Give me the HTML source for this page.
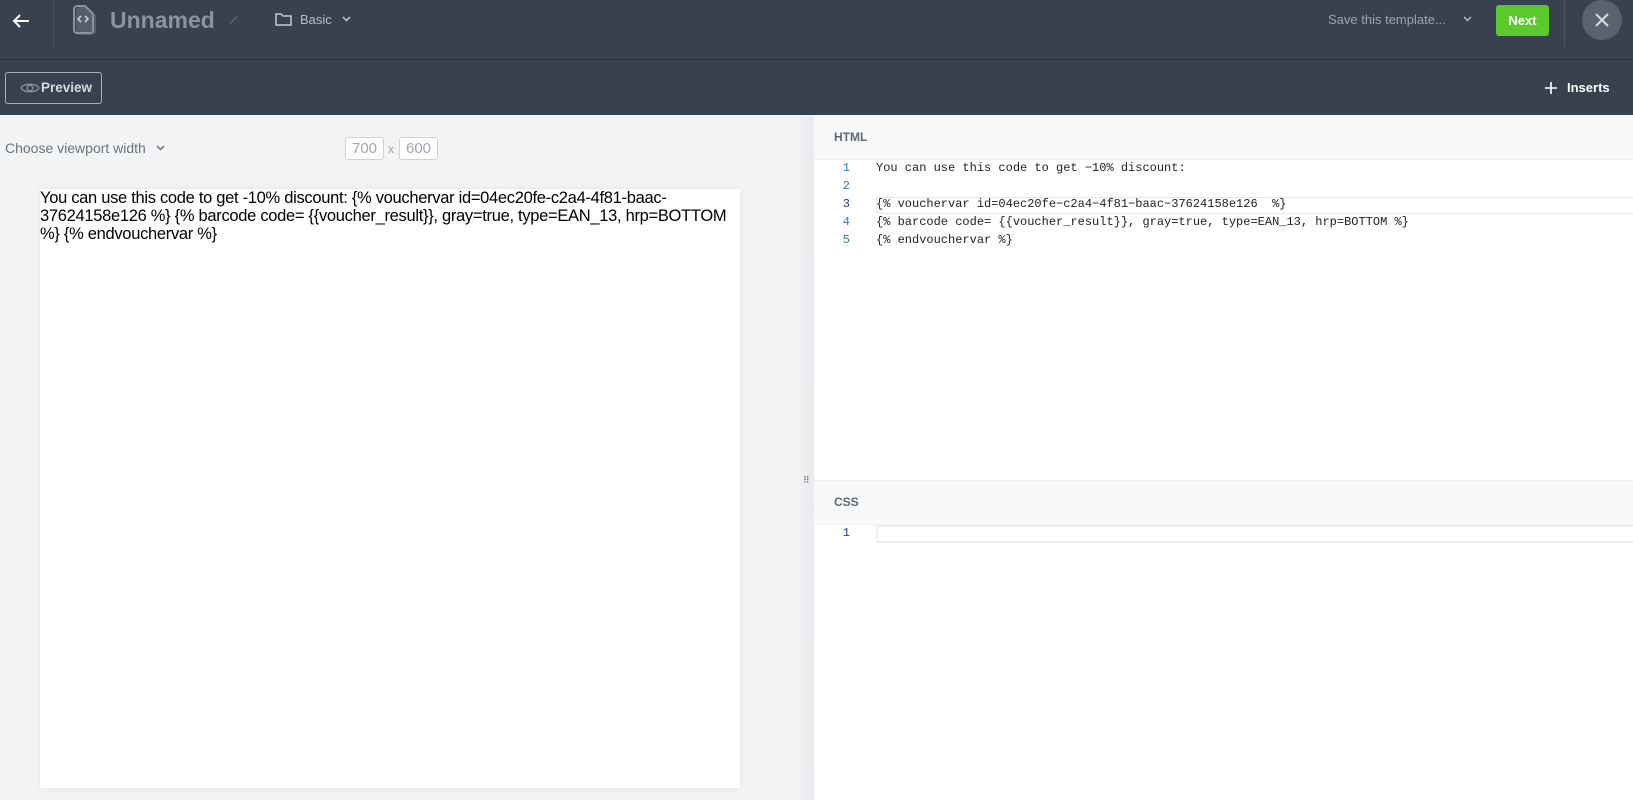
<!DOCTYPE html>
<html><head><meta charset="utf-8"><style>
*{margin:0;padding:0;box-sizing:border-box}
body{width:1633px;height:800px;overflow:hidden;font-family:"Liberation Sans",sans-serif;background:#f3f4f6;position:relative}
.hdr{position:absolute;left:0;top:0;width:1633px;height:60px;background:#38424e;border-bottom:1px solid #2c343e}
.tb{position:absolute;left:0;top:60px;width:1633px;height:55px;background:#38424e}
.a{position:absolute}
.ln{position:absolute;left:810px;width:40px;text-align:right;font:12px "Liberation Mono",monospace;color:#3b7ab0}
.cd{position:absolute;left:876px;font:12px "Liberation Mono",monospace;color:#222;white-space:pre}
</style></head><body>
<div class="hdr"></div>
<svg class="a" style="left:10px;top:10px" width="22" height="22" viewBox="0 0 22 22"><path d="M19 11H4M10 5l-6 6 6 6" stroke="#fff" stroke-width="2" fill="none"/></svg>
<div class="a" style="left:53px;top:0;width:1px;height:47px;background:#4d5662"></div>
<svg class="a" style="left:72px;top:5px" width="28" height="32" viewBox="0 0 28 32"><path d="M4 6a4 4 0 014-4h8l8 8v16a4 4 0 01-4 4H8a4 4 0 01-4-4z" fill="#555f6a"/><path d="M2 4a3 3 0 013-3h8l8 8v16a3 3 0 01-3 3H5a3 3 0 01-3-3z" fill="none" stroke="#8b939c" stroke-width="2"/><path d="M9 11l-3 3 3 3M13 11l3 3-3 3" stroke="#c5cad0" stroke-width="1.6" fill="none"/></svg>
<div class="a" style="left:110px;top:7px;font-size:23px;font-weight:bold;color:#8b939c">Unnamed</div>
<div class="a" style="left:233px;top:15px;width:1px;height:10px;background:#6b737c;transform:rotate(45deg)"></div>
<svg class="a" style="left:275px;top:12px" width="17" height="14" viewBox="0 0 17 14"><path d="M1 2h5l2 2h8v9H1z" fill="none" stroke="#c5cad0" stroke-width="1.5"/></svg>
<div class="a" style="left:300px;top:12px;font-size:13px;color:#b5bcc3">Basic</div>
<svg class="a" style="left:342px;top:16px" width="9" height="6"><path d="M1 1l3.5 3.5L8 1" stroke="#c5cad0" stroke-width="1.5" fill="none"/></svg>
<div class="a" style="left:1328px;top:12px;font-size:13px;color:#9ba3ab">Save this template...</div>
<svg class="a" style="left:1463px;top:16px" width="9" height="6"><path d="M1 1l3.5 3.5L8 1" stroke="#b5bcc3" stroke-width="1.5" fill="none"/></svg>
<div class="a" style="left:1496px;top:5px;width:53px;height:31px;background:#5acb2a;border-radius:3px;color:#fff;font-size:13px;font-weight:bold;text-align:center;line-height:31px">Next</div>
<div class="a" style="left:1564px;top:0;width:1px;height:47px;background:#4d5662"></div>
<div class="a" style="left:1582px;top:0;width:40px;height:40px;border-radius:50%;background:#596370"></div>
<svg class="a" style="left:1594px;top:12px" width="16" height="16"><path d="M2 2l12 12M14 2L2 14" stroke="#d5dade" stroke-width="2"/></svg>
<div class="tb"></div>
<div class="a" style="left:5px;top:72px;width:97px;height:32px;border:1px solid #a9b0b7;border-radius:3px"></div>
<svg class="a" style="left:20px;top:81px" width="20" height="14" viewBox="0 0 20 14"><path d="M1 7c3-5 15-5 18 0c-3 5-15 5-18 0z" fill="none" stroke="#8b939c" stroke-width="1.3"/><circle cx="10" cy="7" r="2.8" fill="none" stroke="#8b939c" stroke-width="1.3"/></svg>
<div class="a" style="left:41px;top:80px;font-size:13.5px;font-weight:bold;color:#d5dade">Preview</div>
<svg class="a" style="left:1545px;top:82px" width="12" height="12"><path d="M6 0v12M0 6h12" stroke="#fff" stroke-width="1.6"/></svg>
<div class="a" style="left:1567px;top:80px;font-size:13px;font-weight:bold;color:#fff">Inserts</div>
<div class="a" style="left:5px;top:140px;font-size:14px;color:#6b737c">Choose viewport width</div>
<svg class="a" style="left:156px;top:145px" width="9" height="6"><path d="M1 1l3.5 3.5L8 1" stroke="#6b737c" stroke-width="1.5" fill="none"/></svg>
<div class="a" style="left:345px;top:137px;width:39px;height:23px;border:1px solid #cfd3d7;border-radius:3px;background:#fff;color:#a0a6ac;font-size:15px;text-align:center;line-height:21px">700</div>
<div class="a" style="left:388px;top:142px;font-size:12px;color:#a0a6ac">x</div>
<div class="a" style="left:399px;top:137px;width:39px;height:23px;border:1px solid #cfd3d7;border-radius:3px;background:#fff;color:#a0a6ac;font-size:15px;text-align:center;line-height:21px">600</div>
<div class="a" style="left:40px;top:189px;width:700px;height:599px;background:#fff;box-shadow:0 0 6px rgba(0,0,0,.08)"></div>
<div class="a" style="left:40px;top:189px;font-size:16.5px;line-height:18px;color:#000;white-space:nowrap;letter-spacing:-0.3px">You can use this code to get -10% discount: {% vouchervar id=04ec20fe-c2a4-4f81-baac-<br>37624158e126 %} {% barcode code= {{voucher_result}}, gray=true, type=EAN_13, hrp=BOTTOM<br>%} {% endvouchervar %}</div>
<div class="a" style="left:794px;top:115px;width:20px;height:685px;background:linear-gradient(90deg,#f3f4f6,#e9ebee)"></div>
<div class="a" style="left:814px;top:115px;width:819px;height:685px;background:#fff"></div>
<div class="a" style="left:814px;top:115px;width:819px;height:45px;background:#f8f9fb;border-bottom:1px solid #eceef1"></div>
<div class="a" style="left:834px;top:130px;font-size:12px;font-weight:bold;color:#5f6872">HTML</div>
<div class="a" style="left:876px;top:197px;width:757px;height:17px;border:1px solid #e6e8eb;border-right:none"></div>
<div class="ln" style="top:161px">1</div><div class="cd" style="top:161px">You can use this code to get −10% discount:</div>
<div class="ln" style="top:179px">2</div>
<div class="ln" style="top:197px;color:#1f3c88">3</div><div class="cd" style="top:197px">{% vouchervar id=04ec20fe−c2a4−4f81−baac−37624158e126  %}</div>
<div class="ln" style="top:215px">4</div><div class="cd" style="top:215px">{% barcode code= {{voucher_result}}, gray=true, type=EAN_13, hrp=BOTTOM %}</div>
<div class="ln" style="top:233px">5</div><div class="cd" style="top:233px">{% endvouchervar %}</div>
<div class="a" style="left:803px;top:475px;font-size:9px;color:#666;letter-spacing:-1px">⠿</div>
<div class="a" style="left:814px;top:480px;width:819px;height:45px;background:#f8f9fb;border-top:1px solid #eceef1;border-bottom:1px solid #eceef1"></div>
<div class="a" style="left:834px;top:495px;font-size:12px;font-weight:bold;color:#5f6872">CSS</div>
<div class="ln" style="top:526px;color:#1f3c88">1</div>
<div class="a" style="left:876px;top:525px;width:757px;height:18px;border:2px solid #eceef1;border-right:none"></div>
</body></html>
